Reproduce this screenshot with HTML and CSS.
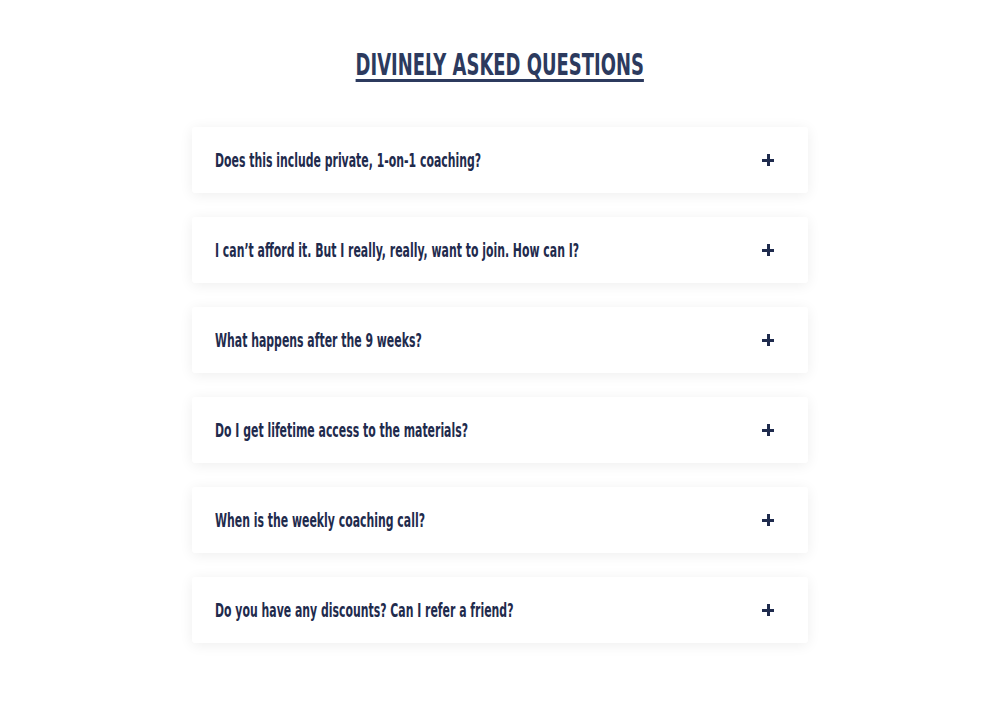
FILE: index.html
```html
<!DOCTYPE html>
<html>
<head>
<meta charset="utf-8">
<link rel="stylesheet" href="styles.css">
</head>
<body>
<main class="faq">
  <h1 class="faq-title"><span class="title-text">DIVINELY ASKED QUESTIONS</span></h1>
  <div class="faq-list">
    <div class="faq-item"><span class="faq-q">Does this include private, 1-on-1 coaching?</span><span class="plus"></span></div>
    <div class="faq-item"><span class="faq-q">I can’t afford it. But I really, really, want to join. How can I?</span><span class="plus"></span></div>
    <div class="faq-item"><span class="faq-q">What happens after the 9 weeks?</span><span class="plus"></span></div>
    <div class="faq-item"><span class="faq-q">Do I get lifetime access to the materials?</span><span class="plus"></span></div>
    <div class="faq-item"><span class="faq-q">When is the weekly coaching call?</span><span class="plus"></span></div>
    <div class="faq-item"><span class="faq-q">Do you have any discounts? Can I refer a friend?</span><span class="plus"></span></div>
  </div>
</main>
</body>
</html>
```
FILE: styles.css
```css
* { box-sizing: border-box; }
html, body { margin: 0; padding: 0; background: #ffffff; }
body {
  font-family: "DejaVu Sans Condensed", "DejaVu Sans", sans-serif;
  color: #1f2b4d;
}
.faq {
  width: 616px;
  margin: 0 auto;
  padding: 46px 0 80px;
}
.faq-title {
  margin: 0 0 43px;
  text-align: center;
  font-size: 30px;
  line-height: 38px;
  font-weight: bold;
  color: #2c3a5e;
}
.title-text {
  display: inline-block;
  text-decoration: underline;
  text-decoration-thickness: 3px;
  text-underline-offset: 4px;
  transform: scaleX(0.665);
  transform-origin: center;
  white-space: nowrap;
}
.faq-list {
  display: flex;
  flex-direction: column;
  gap: 24px;
}
.faq-item {
  height: 66px;
  background: #fff;
  border-radius: 3px;
  box-shadow: 0 2px 14px rgba(0, 0, 0, 0.07);
  display: flex;
  align-items: center;
  padding: 0 34px 0 23px;
}
.faq-q {
  flex: 1 1 0;
  min-width: 0;
  font-size: 19px;
  font-weight: bold;
  color: #1f2b4d;
  white-space: nowrap;
  transform: scaleX(0.638);
  transform-origin: left center;
}
.plus {
  position: relative;
  flex: none;
  width: 12px;
  height: 12px;
}
.plus::before, .plus::after {
  content: "";
  position: absolute;
  background: #1f2b4d;
}
.plus::before { left: 0; top: 5px; width: 12px; height: 2.5px; }
.plus::after { left: 5px; top: 0; width: 2.5px; height: 12px; }
```
